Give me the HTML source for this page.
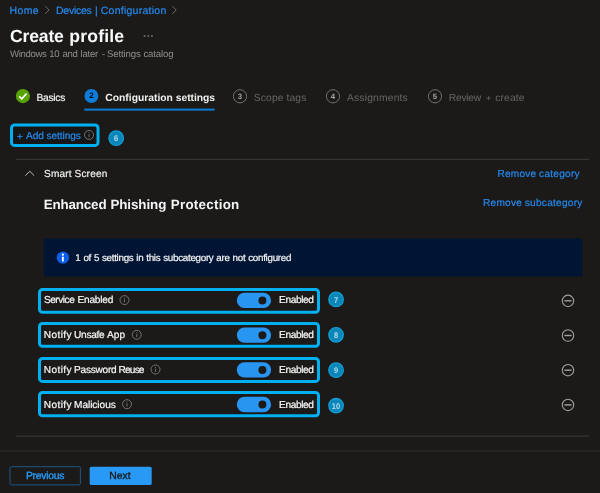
<!DOCTYPE html>
<html lang="en"><head><meta charset="utf-8"><title>Create profile</title>
<style>
html,body{margin:0;padding:0;background:#1b1a19;}
body{width:600px;height:493px;position:relative;overflow:hidden;font-family:"Liberation Sans", sans-serif;}
nav,header,main,footer,.wizard-tabs,.nums{will-change:transform;}
.t{position:absolute;white-space:nowrap;line-height:1;text-rendering:geometricPrecision;}
.a{position:absolute;}
.d{width:20px;text-align:center;}
h1{margin:0;font:inherit;}
svg{position:absolute;overflow:visible;}
</style></head><body>

<svg width="600" height="493" viewBox="0 0 600 493" style="left:0;top:0">
<path d="M45.20 6.10 L49.10 10.00 L45.20 13.90" fill="none" stroke="#6c6a68" stroke-width="1"/>
<path d="M172.30 6.10 L176.20 10.00 L172.30 13.90" fill="none" stroke="#6c6a68" stroke-width="1"/>
<rect x="143.75" y="35.1" width="1.6" height="1.7" fill="#757371"/>
<rect x="147.45" y="35.1" width="1.6" height="1.7" fill="#757371"/>
<rect x="151.15" y="35.1" width="1.6" height="1.7" fill="#757371"/>
<circle cx="22.9" cy="96.1" r="7.1" fill="#57a300"/>
<path d="M19.2 96.3 L21.8 98.8 L26.5 93.6" fill="none" stroke="#fff" stroke-width="1.7"/>
<circle cx="91.4" cy="96" r="6.9" fill="#0c7cd8"/>
<rect x="84.3" y="108.6" width="130.3" height="2" fill="#0c7cd8"/>
<circle cx="240" cy="96.3" r="6.6" fill="none" stroke="#737170" stroke-width="1"/>
<circle cx="333" cy="96.3" r="6.6" fill="none" stroke="#737170" stroke-width="1"/>
<circle cx="435" cy="96.3" r="6.6" fill="none" stroke="#737170" stroke-width="1"/>
<rect x="11.50" y="125.00" width="86.50" height="20.40" rx="3" fill="#161616" stroke="#00b0f0" stroke-width="3"/>
<circle cx="89.00" cy="134.90" r="4.5" fill="none" stroke="#7d7b79" stroke-width="0.9"/>
<path d="M89.00 134.20 V137.20 M89.00 132.40 V133.30" stroke="#7d7b79" stroke-width="0.9" fill="none"/>
<circle cx="116.20" cy="138.20" r="7.3" fill="#0b86b8" stroke="#10a0d8" stroke-width="1.2"/>
<rect x="16" y="158.8" width="573" height="1" fill="#3c3b3a"/>
<rect x="16" y="435.6" width="573" height="1" fill="#3d3c3b"/>
<rect x="0" y="450.4" width="600" height="1" fill="#2f2e2d"/>
<path d="M25.3 175.6 L29.75 171.3 L34.2 175.6" fill="none" stroke="#bdbbb9" stroke-width="1"/>
<rect x="43.8" y="238.4" width="538.7" height="38.2" rx="1.5" fill="#001433"/>
<circle cx="62.85" cy="257.6" r="6.2" fill="#0d5ee6"/>
<path d="M62.85 256.7 V261.5" stroke="#fff" stroke-width="1.8" fill="none"/>
<circle cx="62.85" cy="254.65" r="1.1" fill="#fff"/>
<rect x="39.50" y="289.50" width="279.00" height="22.70" rx="3" fill="#1b1a19" stroke="#00b0f0" stroke-width="3"/>
<rect x="236.8" y="292.75" width="34.3" height="15.3" rx="7.65" fill="#2896f1"/>
<circle cx="262.4" cy="300.50" r="4" fill="#1b1a19"/>
<circle cx="124.50" cy="300.10" r="4.5" fill="none" stroke="#7d7b79" stroke-width="0.9"/>
<path d="M124.50 299.40 V302.40 M124.50 297.60 V298.50" stroke="#7d7b79" stroke-width="0.9" fill="none"/>
<circle cx="568" cy="300.80" r="5.7" fill="none" stroke="#a3a19f" stroke-width="1.1"/>
<path d="M564.4 300.80 H571.6" stroke="#a3a19f" stroke-width="1.4"/>
<rect x="39.50" y="323.50" width="279.00" height="22.80" rx="3" fill="#1b1a19" stroke="#00b0f0" stroke-width="3"/>
<rect x="236.8" y="327.45" width="34.3" height="15.3" rx="7.65" fill="#2896f1"/>
<circle cx="262.4" cy="335.20" r="4" fill="#1b1a19"/>
<circle cx="136.75" cy="334.80" r="4.5" fill="none" stroke="#7d7b79" stroke-width="0.9"/>
<path d="M136.75 334.10 V337.10 M136.75 332.30 V333.20" stroke="#7d7b79" stroke-width="0.9" fill="none"/>
<circle cx="568" cy="335.50" r="5.7" fill="none" stroke="#a3a19f" stroke-width="1.1"/>
<path d="M564.4 335.50 H571.6" stroke="#a3a19f" stroke-width="1.4"/>
<rect x="39.50" y="358.50" width="279.00" height="22.90" rx="3" fill="#1b1a19" stroke="#00b0f0" stroke-width="3"/>
<rect x="236.8" y="362.15" width="34.3" height="15.3" rx="7.65" fill="#2896f1"/>
<circle cx="262.4" cy="369.90" r="4" fill="#1b1a19"/>
<circle cx="155.50" cy="369.50" r="4.5" fill="none" stroke="#7d7b79" stroke-width="0.9"/>
<path d="M155.50 368.80 V371.80 M155.50 367.00 V367.90" stroke="#7d7b79" stroke-width="0.9" fill="none"/>
<circle cx="568" cy="370.20" r="5.7" fill="none" stroke="#a3a19f" stroke-width="1.1"/>
<path d="M564.4 370.20 H571.6" stroke="#a3a19f" stroke-width="1.4"/>
<rect x="39.50" y="392.50" width="279.00" height="23.20" rx="3" fill="#1b1a19" stroke="#00b0f0" stroke-width="3"/>
<rect x="236.8" y="396.85" width="34.3" height="15.3" rx="7.65" fill="#2896f1"/>
<circle cx="262.4" cy="404.60" r="4" fill="#1b1a19"/>
<circle cx="127.00" cy="404.20" r="4.5" fill="none" stroke="#7d7b79" stroke-width="0.9"/>
<path d="M127.00 403.50 V406.50 M127.00 401.70 V402.60" stroke="#7d7b79" stroke-width="0.9" fill="none"/>
<circle cx="568" cy="404.90" r="5.7" fill="none" stroke="#a3a19f" stroke-width="1.1"/>
<path d="M564.4 404.90 H571.6" stroke="#a3a19f" stroke-width="1.4"/>
<circle cx="336.05" cy="299.40" r="7.3" fill="#0b86b8" stroke="#10a0d8" stroke-width="1.2"/>
<circle cx="336.05" cy="334.80" r="7.3" fill="#0b86b8" stroke="#10a0d8" stroke-width="1.2"/>
<circle cx="336.05" cy="370.20" r="7.3" fill="#0b86b8" stroke="#10a0d8" stroke-width="1.2"/>
<circle cx="336.05" cy="405.60" r="7.3" fill="#0b86b8" stroke="#10a0d8" stroke-width="1.2"/>
<rect x="10" y="466.7" width="70.4" height="18.2" rx="1.5" fill="none" stroke="#1d5688" stroke-width="1"/>
<rect x="89.7" y="466.7" width="62" height="18.3" rx="1.5" fill="#2899f5"/>
</svg>
<div class="nums">
<span class="t d" style="left:81.40px;top:92.20px;font-size:8px;font-weight:700;color:#05101a;">2</span>
<span class="t d" style="left:230.00px;top:92.50px;font-size:7.8px;font-weight:700;color:#a6a4a2;">3</span>
<span class="t d" style="left:323.00px;top:92.50px;font-size:7.8px;font-weight:700;color:#a6a4a2;">4</span>
<span class="t d" style="left:425.00px;top:92.50px;font-size:7.8px;font-weight:700;color:#a6a4a2;">5</span>
<span class="t d" style="left:106.30px;top:134.25px;font-size:8.3px;font-weight:700;color:#b4dcee;transform:scaleX(0.9);">6</span>
<span class="t d" style="left:326.10px;top:295.65px;font-size:8.3px;font-weight:700;color:#b4dcee;transform:scaleX(0.9);">7</span>
<span class="t d" style="left:326.10px;top:331.05px;font-size:8.3px;font-weight:700;color:#b4dcee;transform:scaleX(0.9);">8</span>
<span class="t d" style="left:326.10px;top:366.45px;font-size:8.3px;font-weight:700;color:#b4dcee;transform:scaleX(0.9);">9</span>
<span class="t d" style="left:326.10px;top:401.85px;font-size:8.3px;font-weight:700;color:#b4dcee;transform:scaleX(0.9);">10</span>
</div>

<nav class="breadcrumb">
<span class="t" id="bc1" style="left:9.51px;top:6.01px;font-size:10.5px;font-weight:400;color:#2589ee;letter-spacing:0.398px;-webkit-text-stroke:0.2px #2589ee;">Home</span>
<span class="t" id="bc2" style="left:56.05px;top:6.01px;font-size:10.5px;font-weight:400;color:#2589ee;letter-spacing:-0.265px;-webkit-text-stroke:0.2px #2589ee;">Devices </span>
<span class="t" id="bc2b" style="left:94.95px;top:6.01px;font-size:10.5px;font-weight:400;color:#2589ee;letter-spacing:0.000px;-webkit-text-stroke:0.2px #2589ee;">| </span>
<span class="t" id="bc2c" style="left:100.71px;top:6.01px;font-size:10.5px;font-weight:400;color:#2589ee;letter-spacing:0.257px;-webkit-text-stroke:0.2px #2589ee;">Configuration</span>
</nav>
<header class="page-title">
<h1><span class="t" id="titlea" style="left:9.89px;top:28.00px;font-size:17.6px;font-weight:700;color:#fafafa;letter-spacing:-0.149px;">Create </span>
<span class="t" id="titleb" style="left:69.28px;top:28.00px;font-size:17.6px;font-weight:700;color:#fafafa;letter-spacing:0.178px;">profile</span></h1>
<span class="t" id="suba" style="left:9.96px;top:50.07px;font-size:9.6px;font-weight:400;color:#918f8d;letter-spacing:-0.349px;word-spacing:0.558px;">Windows 10 </span>
<span class="t" id="subb" style="left:62.39px;top:50.07px;font-size:9.6px;font-weight:400;color:#918f8d;letter-spacing:-0.222px;word-spacing:0.355px;">and later </span>
<span class="t" id="subc" style="left:101.91px;top:50.07px;font-size:9.6px;font-weight:400;color:#918f8d;letter-spacing:0.000px;">- </span>
<span class="t" id="subd" style="left:107.02px;top:50.07px;font-size:9.6px;font-weight:400;color:#918f8d;letter-spacing:-0.131px;word-spacing:0.209px;">Settings catalog</span>
</header>
<div class="wizard-tabs">
<span class="t" id="tab1" style="left:36.51px;top:94.08px;font-size:10.3px;font-weight:400;color:#f0f0f0;letter-spacing:-0.301px;-webkit-text-stroke:0.18px #f0f0f0;">Basics</span>
<span class="t" id="tab2a" style="left:105.35px;top:94.28px;font-size:10.3px;font-weight:700;color:#f0f0f0;letter-spacing:0.001px;">Configuration </span>
<span class="t" id="tab2b" style="left:175.86px;top:94.28px;font-size:10.3px;font-weight:700;color:#f0f0f0;letter-spacing:-0.062px;">settings</span>
<span class="t" id="tab3" style="left:253.81px;top:94.08px;font-size:10.3px;font-weight:400;color:#676665;letter-spacing:0.133px;word-spacing:-0.214px;">Scope tags</span>
<span class="t" id="tab4" style="left:347.00px;top:94.08px;font-size:10.3px;font-weight:400;color:#676665;letter-spacing:0.179px;">Assignments</span>
<span class="t" id="tab5a" style="left:448.77px;top:94.08px;font-size:10.3px;font-weight:400;color:#676665;letter-spacing:-0.274px;">Review </span>
<span class="t" id="tab5b" style="left:486.12px;top:93.95px;font-size:8.8px;font-weight:400;color:#676665;letter-spacing:0.000px;">+ </span>
<span class="t" id="tab5c" style="left:495.37px;top:94.08px;font-size:10.3px;font-weight:400;color:#676665;letter-spacing:0.090px;">create</span>
</div>
<main class="settings">
<span class="t" id="add0" style="left:16.84px;top:132.80px;font-size:10.4px;font-weight:400;color:#2589ee;letter-spacing:0.000px;-webkit-text-stroke:0.2px #2589ee;">+ </span>
<span class="t" id="add" style="left:26.02px;top:132.25px;font-size:10.1px;font-weight:400;color:#2589ee;letter-spacing:-0.085px;word-spacing:0.137px;-webkit-text-stroke:0.2px #2589ee;">Add settings</span>
<span class="t" id="cat" style="left:44.02px;top:170.45px;font-size:10.1px;font-weight:400;color:#f0f0f0;letter-spacing:0.170px;word-spacing:-0.273px;-webkit-text-stroke:0.18px #f0f0f0;">Smart Screen</span>
<span class="t" id="rmcat" style="left:497.42px;top:170.45px;font-size:10.1px;font-weight:400;color:#2589ee;letter-spacing:0.246px;word-spacing:-0.394px;-webkit-text-stroke:0.2px #2589ee;">Remove category</span>
<span class="t" id="subcata" style="left:43.73px;top:198.26px;font-size:13.4px;font-weight:700;color:#f4f4f4;letter-spacing:-0.165px;">Enhanced </span>
<span class="t" id="subcatb" style="left:110.40px;top:198.26px;font-size:13.4px;font-weight:700;color:#f4f4f4;letter-spacing:-0.080px;">Phishing </span>
<span class="t" id="subcatc" style="left:170.73px;top:198.26px;font-size:13.4px;font-weight:700;color:#f4f4f4;letter-spacing:0.262px;">Protection</span>
<span class="t" id="rmsub" style="left:483.01px;top:199.05px;font-size:10.1px;font-weight:400;color:#2589ee;letter-spacing:0.262px;word-spacing:-0.419px;-webkit-text-stroke:0.2px #2589ee;">Remove subcategory</span>
<span class="t" id="info" style="left:75.36px;top:254.00px;font-size:9.8px;font-weight:400;color:#f6f6f6;letter-spacing:-0.287px;word-spacing:0.459px;-webkit-text-stroke:0.2px #f6f6f6;">1 of 5 settings in this subcategory are not configured</span>
<span class="t" id="r1a" style="left:43.91px;top:295.75px;font-size:10.1px;font-weight:400;color:#f6f6f6;letter-spacing:-0.461px;-webkit-text-stroke:0.22px #f6f6f6;">Service </span>
<span class="t" id="r1b" style="left:77.59px;top:295.75px;font-size:10.1px;font-weight:400;color:#f6f6f6;letter-spacing:-0.229px;-webkit-text-stroke:0.22px #f6f6f6;">Enabled</span>
<span class="t" id="r2a" style="left:43.73px;top:330.75px;font-size:10.1px;font-weight:400;color:#f6f6f6;letter-spacing:0.402px;-webkit-text-stroke:0.22px #f6f6f6;">Notify </span>
<span class="t" id="r2b" style="left:74.12px;top:330.75px;font-size:10.1px;font-weight:400;color:#f6f6f6;letter-spacing:-0.291px;-webkit-text-stroke:0.22px #f6f6f6;">Unsafe </span>
<span class="t" id="r2c" style="left:107.03px;top:330.75px;font-size:10.1px;font-weight:400;color:#f6f6f6;letter-spacing:0.059px;-webkit-text-stroke:0.22px #f6f6f6;">App</span>
<span class="t" id="r3a" style="left:43.73px;top:366.45px;font-size:10.1px;font-weight:400;color:#f6f6f6;letter-spacing:0.402px;-webkit-text-stroke:0.22px #f6f6f6;">Notify </span>
<span class="t" id="r3b" style="left:74.04px;top:366.45px;font-size:10.1px;font-weight:400;color:#f6f6f6;letter-spacing:-0.234px;-webkit-text-stroke:0.22px #f6f6f6;">Password </span>
<span class="t" id="r3c" style="left:118.59px;top:366.45px;font-size:10.1px;font-weight:400;color:#f6f6f6;letter-spacing:-0.820px;-webkit-text-stroke:0.22px #f6f6f6;">Reuse</span>
<span class="t" id="r4a" style="left:43.73px;top:401.15px;font-size:10.1px;font-weight:400;color:#f6f6f6;letter-spacing:0.402px;-webkit-text-stroke:0.22px #f6f6f6;">Notify </span>
<span class="t" id="r4b" style="left:74.04px;top:401.15px;font-size:10.1px;font-weight:400;color:#f6f6f6;letter-spacing:-0.044px;-webkit-text-stroke:0.22px #f6f6f6;">Malicious</span>
<span class="t" id="e1" style="left:279.03px;top:295.75px;font-size:10.1px;font-weight:400;color:#f6f6f6;letter-spacing:-0.347px;-webkit-text-stroke:0.22px #f6f6f6;">Enabled</span>
<span class="t" id="e2" style="left:279.03px;top:330.75px;font-size:10.1px;font-weight:400;color:#f6f6f6;letter-spacing:-0.347px;-webkit-text-stroke:0.22px #f6f6f6;">Enabled</span>
<span class="t" id="e3" style="left:279.03px;top:366.45px;font-size:10.1px;font-weight:400;color:#f6f6f6;letter-spacing:-0.347px;-webkit-text-stroke:0.22px #f6f6f6;">Enabled</span>
<span class="t" id="e4" style="left:279.03px;top:401.15px;font-size:10.1px;font-weight:400;color:#f6f6f6;letter-spacing:-0.347px;-webkit-text-stroke:0.22px #f6f6f6;">Enabled</span>
</main>
<footer class="actions">
<span class="t" id="prev" style="left:25.94px;top:472.40px;font-size:10.4px;font-weight:400;color:#2899f5;letter-spacing:-0.287px;-webkit-text-stroke:0.35px #2899f5;">Previous</span>
<span class="t" id="next" style="left:109.16px;top:472.40px;font-size:10.4px;font-weight:400;color:#1b1a19;letter-spacing:0.010px;-webkit-text-stroke:0.35px #1b1a19;">Next</span>
</footer>
</body></html>
